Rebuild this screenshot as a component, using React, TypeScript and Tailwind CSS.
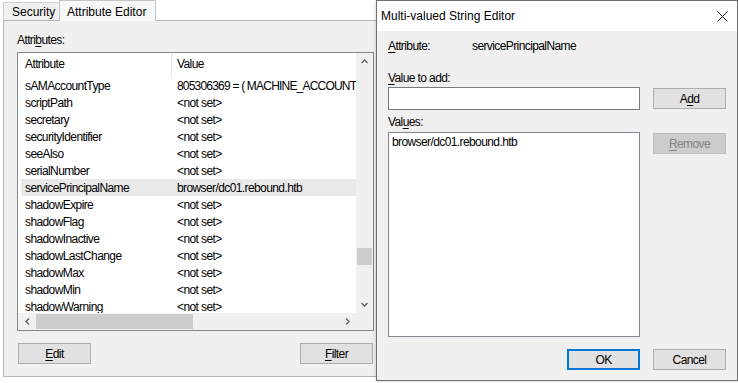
import type { ReactNode } from 'react'

const rows: [string, string][] = [
  ['sAMAccountType', '805306369 = ( MACHINE_ACCOUNT )'],
  ['scriptPath', '<not set>'],
  ['secretary', '<not set>'],
  ['securityIdentifier', '<not set>'],
  ['seeAlso', '<not set>'],
  ['serialNumber', '<not set>'],
  ['servicePrincipalName', 'browser/dc01.rebound.htb'],
  ['shadowExpire', '<not set>'],
  ['shadowFlag', '<not set>'],
  ['shadowInactive', '<not set>'],
  ['shadowLastChange', '<not set>'],
  ['shadowMax', '<not set>'],
  ['shadowMin', '<not set>'],
  ['shadowWarning', '<not set>'],
]

const chevrons = {
  up: 'M1.5 6 L4.5 3 L7.5 6',
  down: 'M1.5 3 L4.5 6 L7.5 3',
  left: 'M6 1.5 L3 4.5 L6 7.5',
  right: 'M3 1.5 L6 4.5 L3 7.5',
}

function Chevron({ dir }: { dir: keyof typeof chevrons }) {
  return (
    <svg width={9} height={9} viewBox="0 0 9 9">
      <path d={chevrons[dir]} fill="none" stroke="#606060" strokeWidth={1.4} />
    </svg>
  )
}

function Btn({ children, className = '' }: { children: ReactNode; className?: string }) {
  return (
    <div className={`flex h-[21px] w-[73px] items-center justify-center border ${className}`}>
      {children}
    </div>
  )
}

const U = ({ children }: { children: ReactNode }) => (
  <span className="underline underline-offset-2">{children}</span>
)

export default function App() {
  return (
    <div className="relative h-[383px] w-[738px] overflow-hidden bg-white font-['Liberation_Sans',Arial,sans-serif] text-black">
      {/* property sheet */}
      <div className="pl-[3px]">
        <div className="flex h-[20px] items-end text-[12px]">
          <div className="flex h-[18px] w-[56px] items-center border-l border-t border-[#d0d0d0] bg-[#f0f0f0] pl-[8px] pt-[1px]">
            Security
          </div>
          <div className="relative z-10 -mb-px flex h-[21px] w-[97px] items-start border-x border-t border-[#c4c4c4] bg-[#f7f7f7] pl-[7px] pt-[2px]">
            Attribute Editor
          </div>
        </div>

        <div className="flex h-[357px] w-[384px] flex-col border border-[#b5b5b5] bg-[#f0f0f0] pl-[13px] pt-[12px] text-[12px] leading-[14px] tracking-[-0.6px]">
          <div>
            Attri<U>b</U>utes:
          </div>

          <div className="mt-[5px] flex h-[279px] w-[357px] flex-col border border-[#828790] bg-white">
            <div className="flex h-[260px]">
              <div className="flex-1 overflow-hidden">
                <div className="flex h-[24px] items-center">
                  <div className="flex h-full w-[153px] items-center pb-[2px] pl-[7px]">Attribute</div>
                  <div className="h-full w-px bg-[#e5e5e5]" />
                  <div className="pb-[2px] pl-[5px]">Value</div>
                </div>
                {rows.map(([name, value], i) => (
                  <div
                    key={name}
                    className={`ml-[3px] flex h-[17px] items-center whitespace-nowrap ${
                      name === 'servicePrincipalName' ? 'bg-[#e9e9e9]' : ''
                    }`}
                  >
                    <div className="w-[156px] shrink-0 pl-[4px]">{name}</div>
                    <div className={i === 0 ? 'tracking-[-0.8px]' : ''}>{value}</div>
                  </div>
                ))}
              </div>
              <div className="flex w-[17px] flex-col bg-[#f0f0f0]">
                <div className="flex h-[17px] items-center justify-center">
                  <Chevron dir="up" />
                </div>
                <div className="flex-1 px-px">
                  <div className="mt-[178px] h-[17px] bg-[#cdcdcd]" />
                </div>
                <div className="flex h-[17px] items-center justify-center">
                  <Chevron dir="down" />
                </div>
              </div>
            </div>
            <div className="flex h-[17px] bg-[#f0f0f0]">
              <div className="flex flex-1 items-center">
                <div className="flex w-[18px] justify-center">
                  <Chevron dir="left" />
                </div>
                <div className="h-[15px] w-[157px] bg-[#cdcdcd]" />
                <div className="flex-1" />
                <div className="flex w-[17px] justify-center">
                  <Chevron dir="right" />
                </div>
              </div>
              <div className="w-[17px]" />
            </div>
          </div>

          <div className="mt-[12px] flex w-[357px] justify-between px-px">
            <Btn className="border-[#adadad] bg-[#e1e1e1]">
              <U>E</U>dit
            </Btn>
            <Btn className="border-[#adadad] bg-[#e1e1e1]">
              <U>F</U>ilter
            </Btn>
          </div>
        </div>
      </div>

      {/* Multi-valued String Editor window */}
      <div className="absolute left-[376px] top-0 flex h-[381px] w-[362px] flex-col border border-[#6f6f6f] bg-[#f0f0f0] shadow-[0_0_4px_rgba(0,0,0,0.2)]">
        <div className="flex h-[30px] items-center justify-between bg-white pl-[4px] pr-[9px] text-[12px]">
          <span>Multi-valued String Editor</span>
          <svg width={11} height={11} viewBox="0 0 11 11">
            <path d="M0.5 0.5 L10.5 10.5 M10.5 0.5 L0.5 10.5" stroke="#1a1a1a" strokeWidth={1} />
          </svg>
        </div>

        <div className="flex flex-col pl-[11px] pr-[11px] pt-[8px] text-[12px] leading-[14px] tracking-[-0.6px]">
          <div className="flex">
            <div className="w-[84px]">
              <U>A</U>ttribute:
            </div>
            <div>servicePrincipalName</div>
          </div>

          <div className="mt-[18px]">
            <U>V</U>alue to add:
          </div>
          <div className="mt-[2px] flex items-start gap-[13px]">
            <div className="h-[23px] w-[252px] border border-[#7a7a7a] bg-white" />
            <Btn className="mt-px border-[#adadad] bg-[#e1e1e1]">
              A<U>d</U>d
            </Btn>
          </div>

          <div className="mt-[5px]">
            Val<U>u</U>es:
          </div>
          <div className="mt-[3px] flex items-start gap-[13px]">
            <div className="h-[205px] w-[252px] border border-[#828790] bg-white px-[3px] pt-[2px]">
              browser/dc01.rebound.htb
            </div>
            <Btn className="mt-px border-[#bfbfbf] bg-[#cccccc] text-[#838383]">
              <U>R</U>emove
            </Btn>
          </div>

          <div className="mt-[12px] flex justify-end gap-[13px]">
            <Btn className="border-2 border-[#0078d7] bg-[#e1e1e1]">OK</Btn>
            <Btn className="border-[#adadad] bg-[#e1e1e1]">Cancel</Btn>
          </div>
        </div>
      </div>
    </div>
  )
}
